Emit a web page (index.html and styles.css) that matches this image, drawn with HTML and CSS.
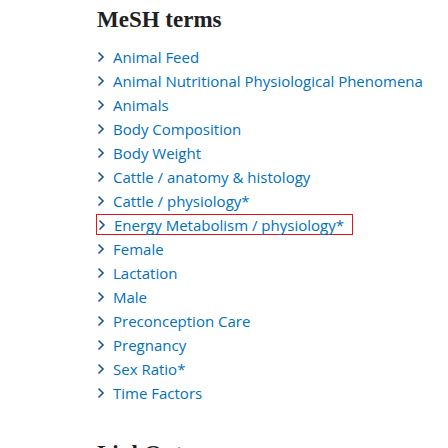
FILE: index.html
```html
<!DOCTYPE html>
<html>
<head>
<meta charset="utf-8">
<link rel="stylesheet" href="styles.css">
</head>
<body>
<section class="mesh">
  <h2 class="title">MeSH terms</h2>
  <ul class="terms">
    <li><span class="chev"><svg width="8" height="12" viewBox="0 0 8 12"><path d="M1.5 1.5 L6 6 L1.5 10.5" fill="none" stroke="#205493" stroke-width="1.6"/></svg></span><a>Animal Feed</a></li>
    <li><span class="chev"><svg width="8" height="12" viewBox="0 0 8 12"><path d="M1.5 1.5 L6 6 L1.5 10.5" fill="none" stroke="#205493" stroke-width="1.6"/></svg></span><a>Animal Nutritional Physiological Phenomena</a></li>
    <li><span class="chev"><svg width="8" height="12" viewBox="0 0 8 12"><path d="M1.5 1.5 L6 6 L1.5 10.5" fill="none" stroke="#205493" stroke-width="1.6"/></svg></span><a>Animals</a></li>
    <li><span class="chev"><svg width="8" height="12" viewBox="0 0 8 12"><path d="M1.5 1.5 L6 6 L1.5 10.5" fill="none" stroke="#205493" stroke-width="1.6"/></svg></span><a>Body Composition</a></li>
    <li><span class="chev"><svg width="8" height="12" viewBox="0 0 8 12"><path d="M1.5 1.5 L6 6 L1.5 10.5" fill="none" stroke="#205493" stroke-width="1.6"/></svg></span><a>Body Weight</a></li>
    <li><span class="chev"><svg width="8" height="12" viewBox="0 0 8 12"><path d="M1.5 1.5 L6 6 L1.5 10.5" fill="none" stroke="#205493" stroke-width="1.6"/></svg></span><a>Cattle / anatomy &amp; histology</a></li>
    <li><span class="chev"><svg width="8" height="12" viewBox="0 0 8 12"><path d="M1.5 1.5 L6 6 L1.5 10.5" fill="none" stroke="#205493" stroke-width="1.6"/></svg></span><a>Cattle / physiology*</a></li>
    <li class="hl"><span class="chev"><svg width="8" height="12" viewBox="0 0 8 12"><path d="M1.5 1.5 L6 6 L1.5 10.5" fill="none" stroke="#205493" stroke-width="1.6"/></svg></span><a>Energy Metabolism / physiology*</a></li>
    <li><span class="chev"><svg width="8" height="12" viewBox="0 0 8 12"><path d="M1.5 1.5 L6 6 L1.5 10.5" fill="none" stroke="#205493" stroke-width="1.6"/></svg></span><a>Female</a></li>
    <li><span class="chev"><svg width="8" height="12" viewBox="0 0 8 12"><path d="M1.5 1.5 L6 6 L1.5 10.5" fill="none" stroke="#205493" stroke-width="1.6"/></svg></span><a>Lactation</a></li>
    <li><span class="chev"><svg width="8" height="12" viewBox="0 0 8 12"><path d="M1.5 1.5 L6 6 L1.5 10.5" fill="none" stroke="#205493" stroke-width="1.6"/></svg></span><a>Male</a></li>
    <li><span class="chev"><svg width="8" height="12" viewBox="0 0 8 12"><path d="M1.5 1.5 L6 6 L1.5 10.5" fill="none" stroke="#205493" stroke-width="1.6"/></svg></span><a>Preconception Care</a></li>
    <li><span class="chev"><svg width="8" height="12" viewBox="0 0 8 12"><path d="M1.5 1.5 L6 6 L1.5 10.5" fill="none" stroke="#205493" stroke-width="1.6"/></svg></span><a>Pregnancy</a></li>
    <li><span class="chev"><svg width="8" height="12" viewBox="0 0 8 12"><path d="M1.5 1.5 L6 6 L1.5 10.5" fill="none" stroke="#205493" stroke-width="1.6"/></svg></span><a>Sex Ratio*</a></li>
    <li><span class="chev"><svg width="8" height="12" viewBox="0 0 8 12"><path d="M1.5 1.5 L6 6 L1.5 10.5" fill="none" stroke="#205493" stroke-width="1.6"/></svg></span><a>Time Factors</a></li>
  </ul>
  <h2 class="title next">LinkOut</h2>
</section>
</body>
</html>
```
FILE: styles.css
```css
html, body {
  margin: 0;
  padding: 0;
  background: #ffffff;
  overflow: hidden;
}
.mesh {
  padding: 6px 0 0 97px;
}
.title {
  margin: 0;
  font-family: "Liberation Serif", serif;
  font-weight: bold;
  font-size: 23px;
  line-height: 28px;
  color: #212121;
}
.terms {
  list-style: none;
  margin: 11px 0 0 0;
  padding: 0;
}
.terms li {
  display: flex;
  align-items: center;
  height: 24px;
  font-family: "Open Sans", sans-serif;
  font-size: 15px;
  color: #0071bc;
  white-space: nowrap;
}
.terms li.hl {
  box-sizing: border-box;
  width: 257px;
  margin-left: -1px;
  padding-left: 1px;
  height: 21px;
  margin-top: 1px;
  margin-bottom: 2px;
  border: 1px solid #e5141b;
}
.chev {
  display: flex;
  width: 16px;
  flex: none;
}
.terms a {
  color: #0071bc;
}
.title.next {
  margin-top: 35px;
}
```
